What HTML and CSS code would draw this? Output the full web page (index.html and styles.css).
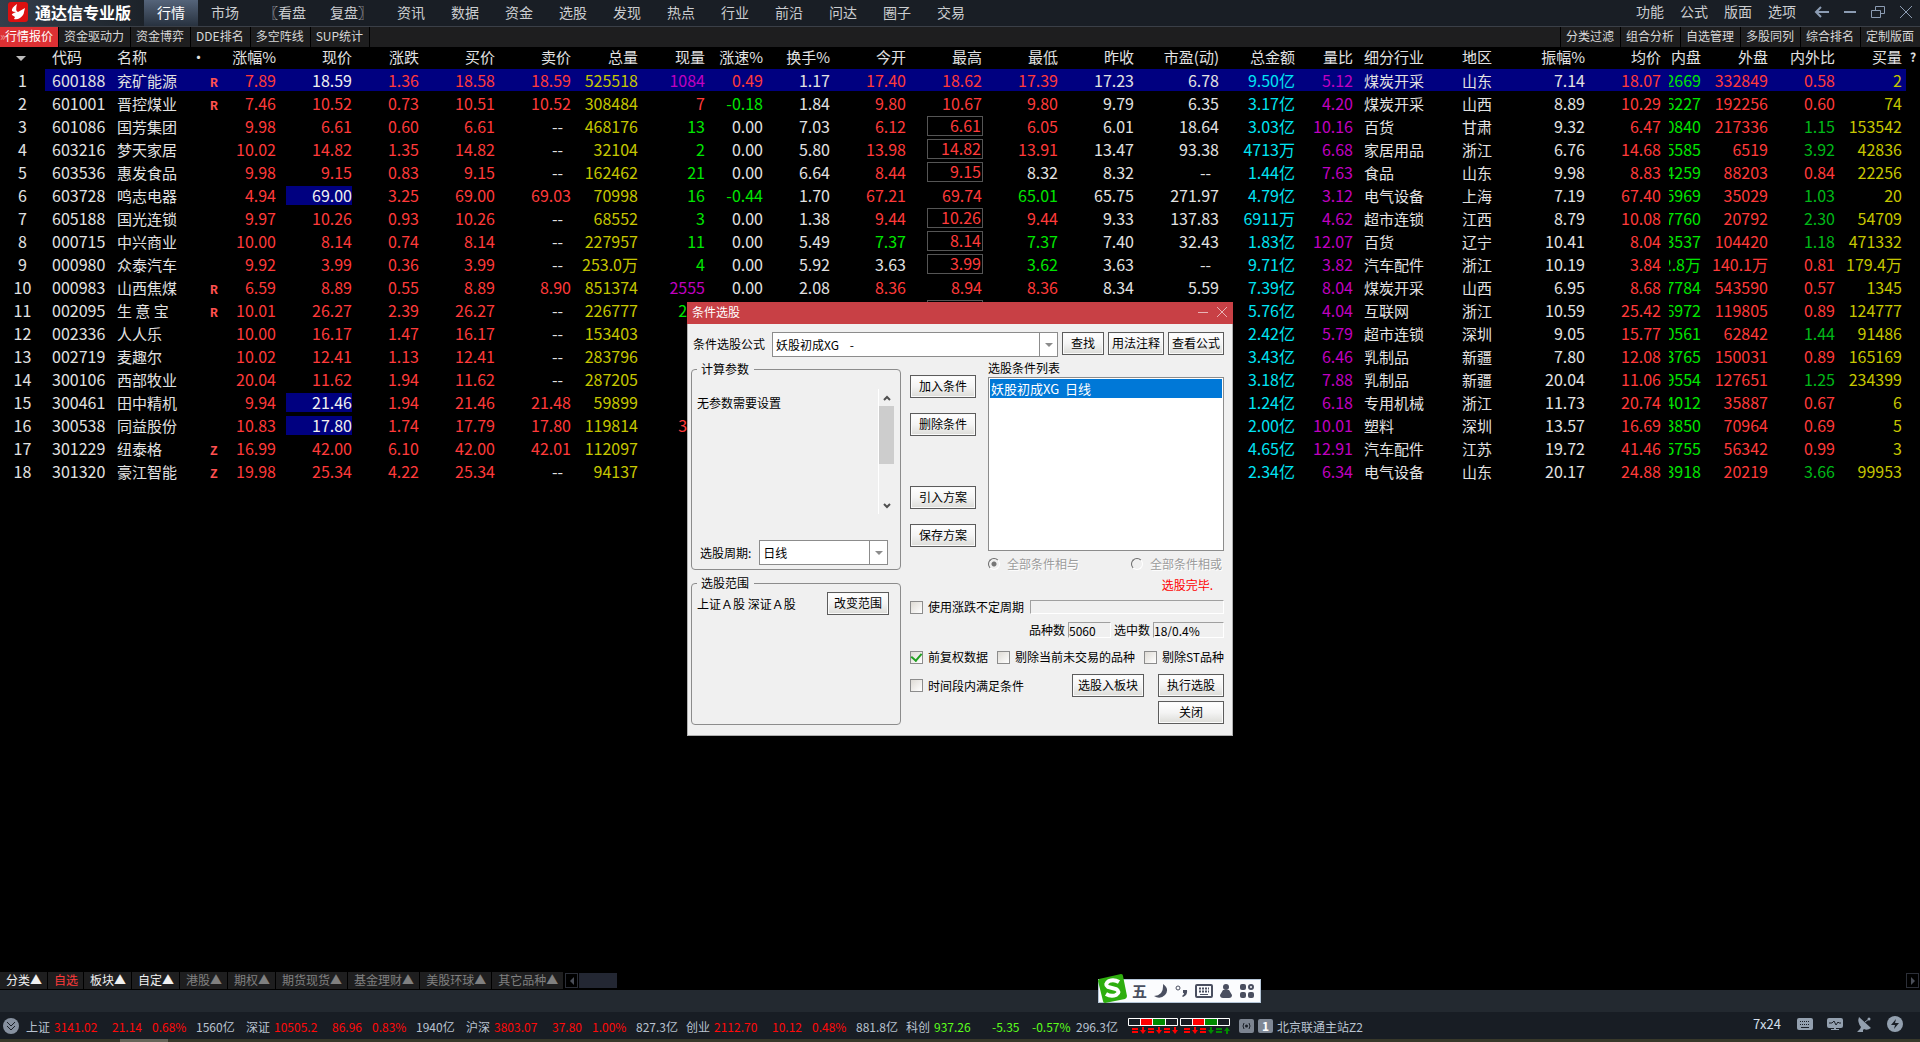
FILE: index.html
```html
<!DOCTYPE html>
<html lang="zh-CN">
<head>
    <meta charset="UTF-8">
    <meta name="viewport" content="width=device-width, initial-scale=1.0">
    <title>通达信专业版</title>
    <link rel="stylesheet" href="styles.css">
</head>
<body>
    <header class="topbar">
        <div class="brand">
            <svg width="20" height="20" viewBox="0 0 20 20">
                <rect width="20" height="20" rx="3" fill="#dc1010"/>
                <path d="M9 2Q3 6 4 9q1 1 4 1-5 2-4 3l3 2-1 2q3 1 6-1 4-3 4-6l1-4-7 4q-3-1-1-8z" fill="#fff"/>
            </svg>
            <span>通达信专业版</span>
        </div>
        <nav class="menu">
            <a href="#" class="active">行情</a>
            <a href="#">市场</a>
            <a href="#" class="wide">〖看盘</a>
            <a href="#" class="wide">复盘〗</a>
            <a href="#">资讯</a>
            <a href="#">数据</a>
            <a href="#">资金</a>
            <a href="#">选股</a>
            <a href="#">发现</a>
            <a href="#">热点</a>
            <a href="#">行业</a>
            <a href="#">前沿</a>
            <a href="#">问达</a>
            <a href="#">圈子</a>
            <a href="#">交易</a>
        </nav>
        <nav class="system">
            <a href="#">功能</a>
            <a href="#">公式</a>
            <a href="#">版面</a>
            <a href="#">选项</a>
        </nav>
        <div class="window-buttons">
            <button type="button" aria-label="返回"><svg width="16" height="16" viewBox="0 0 16 16"><path d="M15 8H2M7 3 2 8l5 5" stroke-width="2"/></svg></button>
            <button type="button" aria-label="最小化"><svg width="16" height="16" viewBox="0 0 16 16"><path d="M2 8h12" stroke-width="2"/></svg></button>
            <button type="button" aria-label="还原"><svg width="16" height="16" viewBox="0 0 16 16"><path d="M5.500 6V2.500h9v7H11M1.500 6.500h9v7h-9z"/></svg></button>
            <button type="button" aria-label="关闭"><svg width="16" height="16" viewBox="0 0 16 16"><path d="M2 2l12 12M14 2 2 14"/></svg></button>
        </div>
    </header>

    <div class="subbar">
        <nav class="views">
            <a href="#" class="active">行情报价</a>
            <a href="#">资金驱动力</a>
            <a href="#">资金博弈</a>
            <a href="#">DDE排名</a>
            <a href="#">多空阵线</a>
            <a href="#">SUP统计</a>
        </nav>
        <nav class="tools">
            <a href="#">分类过滤</a>
            <a href="#">组合分析</a>
            <a href="#">自选管理</a>
            <a href="#">多股同列</a>
            <a href="#">综合排名</a>
            <a href="#">定制版面</a>
        </nav>
    </div>

    <main class="board">
        <table class="quotes">
            <colgroup>
                <col class="w-index"><col class="w-code"><col class="w-name"><col class="w-mark"><col class="w-pct">
                <col class="w-num"><col class="w-short"><col class="w-num"><col class="w-num"><col class="w-short">
                <col class="w-short"><col class="w-speed"><col class="w-short"><col class="w-num"><col class="w-num">
                <col class="w-num"><col class="w-num"><col class="w-pe"><col class="w-num"><col class="w-speed">
                <col class="w-industry"><col class="w-area"><col class="w-amp"><col class="w-num"><col class="w-inner">
                <col class="w-short"><col class="w-short"><col class="w-bidvol"><col class="w-help">
            </colgroup>
            <thead>
                <tr>
                    <th><span class="sort"></span></th><th>代码</th><th>名称</th><th>•</th><th>涨幅%</th>
                    <th>现价</th><th>涨跌</th><th>买价</th><th>卖价</th><th>总量</th>
                    <th>现量</th><th>涨速%</th><th>换手%</th><th>今开</th><th>最高</th>
                    <th>最低</th><th>昨收</th><th>市盈(动)</th><th>总金额</th><th>量比</th>
                    <th>细分行业</th><th>地区</th><th>振幅%</th><th>均价</th><th>内盘</th>
                    <th>外盘</th><th>内外比</th><th>买量</th><th>?</th>
                </tr>
            </thead>
            <tbody id="quotes-body"></tbody>
        </table>
    </main>

    <nav class="market-tabs">
        <a href="#">分类▲</a>
        <a href="#" class="active">自选</a>
        <a href="#">板块▲</a>
        <a href="#">自定▲</a>
        <a href="#" class="dim">港股▲</a>
        <a href="#" class="dim">期权▲</a>
        <a href="#" class="dim">期货现货▲</a>
        <a href="#" class="dim">基金理财▲</a>
        <a href="#" class="dim">美股环球▲</a>
        <a href="#" class="dim">其它品种▲</a>
        <button type="button" class="scroll-btn" aria-label="向左"><svg width="6" height="8" viewBox="0 0 6 8"><path d="M5 0v8L1 4z"/></svg></button>
        <span class="scroll-thumb"></span>
        <button type="button" class="scroll-btn last" aria-label="向右"><svg width="6" height="8" viewBox="0 0 6 8"><path d="M1 0v8l4-4z"/></svg></button>
    </nav>

    <div class="band"></div>

    <footer class="status">
        <svg class="expand" width="16" height="18" viewBox="0 0 16 18">
            <ellipse cx="8" cy="9" rx="8" ry="8" fill="#8791a0"/>
            <path d="M4 5l4 4 4-4M4 9l4 4 4-4" fill="none" stroke="#1a1f27"/>
        </svg>
        <div class="index up"><b>上证</b><i>3141.02</i><i>21.14</i><i>0.68%</i><b>1560亿</b></div>
        <div class="index up"><b>深证</b><i>10505.2</i><i>86.96</i><i>0.83%</i><b>1940亿</b></div>
        <div class="index up"><b>沪深</b><i>3803.07</i><i>37.80</i><i>1.00%</i><b>827.3亿</b></div>
        <div class="index up"><b>创业</b><i>2112.70</i><i>10.12</i><i>0.48%</i><b>881.8亿</b></div>
        <div class="index down"><b>科创</b><i>937.26</i><i>-5.35</i><i>-0.57%</i><b>296.3亿</b></div>
        <svg class="breadth" width="103" height="16" viewBox="0 0 103 16">
            <path d="M12 1h13v6H12zM64 1h13v6H64z" fill="#f00"/>
            <path d="M25 1h12v6H25zM77 1h12v6H77z" fill="#008a00"/>
            <path d="M.5.5h49v7H.5zM12.500 1v6M24.500 1v6M37.500 1v6M52.500.5h49v7h-49zM64.500 1v6M76.500 1v6M89.500 1v6" fill="none" stroke="#fff"/>
            <path d="M4 10h6v2H4zM4 13h6v2H4zM20 10h6v2h-6zM20 13h6v2h-6zM36 10h6v2h-6zM36 13h6v2h-6zM56 10h6v2h-6zM56 13h6v2h-6zM72 10h6v2h-6zM72 13h6v2h-6zM14 9h2v3h2l-3 4-3-4h2zM30 9h2v3h2l-3 4-3-4h2zM46 9h2v3h2l-3 4-3-4h2zM66 9h2v3h2l-3 4-3-4h2z" fill="#f00"/>
            <path d="M82 9h2v3h2l-3 4-3-4h2zM88 10h6v2h-6zM88 13h6v2h-6zM98 16h2v-3h2l-3-4-3 4h2z" fill="#008a00"/>
        </svg>
        <div class="server">
            <svg width="15" height="14" viewBox="0 0 15 14">
                <rect width="15" height="14" rx="2" fill="#7c8490"/>
                <path d="M5 4q-2 3 0 6M10 4q2 3 0 6" fill="none" stroke="#1a1f27"/>
                <circle cx="7.500" cy="7" r="1.500" fill="#1a1f27"/>
            </svg>
            <span class="server-no">1</span>
            <span>北京联通主站Z2</span>
        </div>
        <div class="tray">
            <span class="clock">7x24</span>
            <svg width="16" height="16" viewBox="0 0 16 16">
                <rect y="2" width="16" height="12" rx="2" fill="#93a0af"/>
                <path d="M3 5.500h10M3 8.500h10" stroke="#1a1f27" stroke-dasharray="1 1"/>
                <path d="M4 11.500h8" stroke="#1a1f27"/>
            </svg>
            <svg width="16" height="16" viewBox="0 0 16 16">
                <path d="M2 2h12q2 0 2 2v6q0 2-2 2H9v1h3v1H4v-1h3v-1H2q-2 0-2-2V4q0-2 2-2z" fill="#93a0af"/>
                <path d="M2 7h3l2-2 2 4 2-3 1 1h2" fill="none" stroke="#1a1f27"/>
            </svg>
            <svg width="16" height="16" viewBox="0 0 16 16">
                <path d="M2 1l12 11q-4 3-7 1l-1 1v2H0l3-3 1-2Q0 6 2 1z" fill="#93a0af"/>
                <path d="M8 6l4-3" stroke="#93a0af"/>
                <circle cx="12" cy="3" r="1.500" fill="#93a0af"/>
            </svg>
            <svg width="16" height="16" viewBox="0 0 16 16">
                <circle cx="8" cy="8" r="8" fill="#93a0af"/>
                <path d="M9 3 4 9h4l-1 4 5-6H8z" fill="#1a1f27"/>
            </svg>
        </div>
    </footer>
    <div class="desk-edge"><span></span></div>

    <div class="ime">
        <svg class="ime-logo" width="30" height="29" viewBox="0 0 30 29">
            <path d="M1 5 23 0q2 0 2 2l4 20q0 2-2 3L7 29q-2 0-2-2L0 7q0-1 1-2z" fill="#2eae0e"/>
            <path d="M21 8q-5-3-10-1-5 3-1 6l8 2q5 3 0 6-5 2-10-1" fill="none" stroke="#fff" stroke-width="4"/>
        </svg>
        <span class="ime-mode">五</span>
        <svg width="16" height="16" viewBox="0 0 16 16"><path d="M10 1q7 5 2 11-5 5-11 1 10 0 9-12z"/></svg>
        <svg width="14" height="16" viewBox="0 0 14 16"><circle cx="3" cy="5" r="2" fill="none" stroke="#4a4f60"/><path d="M8 7h4q1 5-4 7l-1-1q2-1 2-3H8z"/></svg>
        <svg width="18" height="16" viewBox="0 0 18 16"><path d="M2 2h14q1 0 1 1v10q0 1-1 1H2q-1 0-1-1V3q0-1 1-1z" fill="none" stroke="#4a4f60" stroke-width="2"/><path d="M4 5.500h10M4 8.500h10" stroke="#4a4f60" stroke-width="2" stroke-dasharray="2 1"/><path d="M5 11.500h8" stroke="#4a4f60"/></svg>
        <svg width="14" height="16" viewBox="0 0 14 16"><circle cx="7" cy="4" r="3"/><path d="M4 7h6l3 5q0 3-3 3H4q-3 0-3-3z"/></svg>
        <svg width="16" height="16" viewBox="0 0 16 16"><rect x="1" y="1" width="6" height="6" rx="2"/><rect x="1" y="9" width="6" height="6" rx="2"/><rect x="9" y="9" width="6" height="6" rx="2"/><circle cx="12" cy="4" r="2" fill="none" stroke="#4a4f60" stroke-width="2"/></svg>
    </div>

    <section class="dialog" role="dialog" aria-labelledby="dialog-title">
        <div class="dialog-title">
            <span id="dialog-title">条件选股</span>
            <button type="button" aria-label="最小化"><svg width="10" height="10" viewBox="0 0 10 10"><path d="M0 5.500h10"/></svg></button>
            <button type="button" aria-label="关闭"><svg width="10" height="10" viewBox="0 0 10 10"><path d="M0 0l10 10M10 0 0 10"/></svg></button>
        </div>
        <form class="dialog-body">
            <div class="formula">
                <label for="formula">条件选股公式</label>
                <div class="combo">
                    <select id="formula"><option>妖股初成XG&nbsp;&nbsp;&nbsp; -</option></select>
                </div>
                <button type="button">查找</button>
                <button type="button">用法注释</button>
                <button type="button">查看公式</button>
            </div>
            <div class="columns">
                <div class="left">
                    <fieldset class="params">
                        <legend>计算参数</legend>
                        <div class="param-box">
                            <span>无参数需要设置</span>
                            <div class="scrollbar">
                                <svg width="8" height="17" viewBox="0 0 8 17"><path d="M1 11l3-3 3 3"/></svg>
                                <div class="thumb"></div>
                                <svg width="8" height="17" viewBox="0 0 8 17"><path d="M1 7l3 3 3-3"/></svg>
                            </div>
                        </div>
                        <div class="period">
                            <label for="period">选股周期:</label>
                            <div class="combo">
                                <select id="period"><option>日线</option></select>
                            </div>
                        </div>
                    </fieldset>
                    <fieldset class="range">
                        <legend>选股范围</legend>
                        <div class="range-row">
                            <span>上证Ａ股 深证Ａ股</span>
                            <button type="button">改变范围</button>
                        </div>
                    </fieldset>
                </div>
                <div class="right">
                    <div class="conditions">
                        <div class="actions">
                            <button type="button">加入条件</button>
                            <button type="button">删除条件</button>
                            <button type="button" class="apart">引入方案</button>
                            <button type="button">保存方案</button>
                        </div>
                        <div class="list">
                            <div id="list-label">选股条件列表</div>
                            <ul role="listbox" aria-labelledby="list-label">
                                <li role="option" aria-selected="true">妖股初成XG&nbsp; 日线</li>
                            </ul>
                            <div class="logic">
                                <label><input type="radio" name="logic" checked disabled>全部条件相与</label>
                                <label><input type="radio" name="logic" disabled>全部条件相或</label>
                            </div>
                        </div>
                    </div>
                    <div class="done">选股完毕.</div>
                    <div class="row variable">
                        <label><input type="checkbox">使用涨跌不定周期</label>
                        <input type="text" class="sunken" aria-label="涨跌不定周期" readonly>
                    </div>
                    <div class="row counts">
                        <label for="total">品种数</label>
                        <input type="text" id="total" class="sunken total" value="5060" readonly>
                        <label for="picked">选中数</label>
                        <input type="text" id="picked" class="sunken picked" value="18/0.4%" readonly>
                    </div>
                    <div class="row filters">
                        <label><input type="checkbox" checked>前复权数据</label>
                        <label><input type="checkbox">剔除当前未交易的品种</label>
                        <label><input type="checkbox">剔除ST品种</label>
                    </div>
                    <div class="row run">
                        <label><input type="checkbox">时间段内满足条件</label>
                        <button type="button">选股入板块</button>
                        <button type="button" class="main-btn">执行选股</button>
                    </div>
                    <div class="row close">
                        <button type="button" class="main-btn">关闭</button>
                    </div>
                </div>
            </div>
        </form>
    </section>

    <script src="quotes.js"></script>
</body>
</html>
```

FILE: quotes.js
```js
// 代码|名称|标记|涨幅|现价|涨跌|买价|卖价|总量|现量|涨速|换手|今开|最高|最低|昨收|市盈|总金额|量比|行业|地区|振幅|均价|内盘|外盘|内外比|买量
// 现价前的 ! 表示刚刚变动；现量前的 + - * 表示买盘、卖盘、大单
const rows = [
    '600188|兖矿能源|R|7.89|!18.59|1.36|18.58|18.59|525518|*1084|0.49|1.17|17.40|18.62|17.39|17.23|6.78|9.50亿|5.12|煤炭开采|山东|7.14|18.07|2669|332849|0.58|2',
    '601001|晋控煤业|R|7.46|10.52|0.73|10.51|10.52|308484|+7|-0.18|1.84|9.80|10.67|9.80|9.79|6.35|3.17亿|4.20|煤炭开采|山西|8.89|10.29|6227|192256|0.60|74',
    '601086|国芳集团||9.98|6.61|0.60|6.61|--|468176|-13|0.00|7.03|6.12|6.61|6.05|6.01|18.64|3.03亿|10.16|百货|甘肃|9.32|6.47|0840|217336|1.15|153542',
    '603216|梦天家居||10.02|14.82|1.35|14.82|--|32104|-2|0.00|5.80|13.98|14.82|13.91|13.47|93.38|4713万|6.68|家居用品|浙江|6.76|14.68|5585|6519|3.92|42836',
    '603536|惠发食品||9.98|9.15|0.83|9.15|--|162462|-21|0.00|6.64|8.44|9.15|8.32|8.32|--|1.44亿|7.63|食品|山东|9.98|8.83|4259|88203|0.84|22256',
    '603728|鸣志电器||4.94|!69.00|3.25|69.00|69.03|70998|-16|-0.44|1.70|67.21|69.74|65.01|65.75|271.97|4.79亿|3.12|电气设备|上海|7.19|67.40|5969|35029|1.03|20',
    '605188|国光连锁||9.97|10.26|0.93|10.26|--|68552|-3|0.00|1.38|9.44|10.26|9.44|9.33|137.83|6911万|4.62|超市连锁|江西|8.79|10.08|7760|20792|2.30|54709',
    '000715|中兴商业||10.00|8.14|0.74|8.14|--|227957|-11|0.00|5.49|7.37|8.14|7.37|7.40|32.43|1.83亿|12.07|百货|辽宁|10.41|8.04|3537|104420|1.18|471332',
    '000980|众泰汽车||9.92|3.99|0.36|3.99|--|253.0万|-4|0.00|5.92|3.63|3.99|3.62|3.63|--|9.71亿|3.82|汽车配件|浙江|10.19|3.84|2.8万|140.1万|0.81|179.4万',
    '000983|山西焦煤|R|6.59|8.89|0.55|8.89|8.90|851374|*2555|0.00|2.08|8.36|8.94|8.36|8.34|5.59|7.39亿|8.04|煤炭开采|山西|6.95|8.68|7784|543590|0.57|1345',
    '002095|生 意 宝|R|10.01|26.27|2.39|26.27|--|226777|-215||||26.27||||5.76亿|4.04|互联网|浙江|10.59|25.42|6972|119805|0.89|124777',
    '002336|人人乐||10.00|16.17|1.47|16.17|--|153403|||||||||2.42亿|5.79|超市连锁|深圳|9.05|15.77|0561|62842|1.44|91486',
    '002719|麦趣尔||10.02|12.41|1.13|12.41|--|283796|||||||||3.43亿|6.46|乳制品|新疆|7.80|12.08|3765|150031|0.89|165169',
    '300106|西部牧业||20.04|11.62|1.94|11.62|--|287205|||||||||3.18亿|7.88|乳制品|新疆|20.04|11.06|9554|127651|1.25|234399',
    '300461|田中精机||9.94|!21.46|1.94|21.46|21.48|59899|||||||||1.24亿|6.18|专用机械|浙江|11.73|20.74|4012|35887|0.67|6',
    '300538|同益股份||10.83|!17.80|1.74|17.79|17.80|119814|+360||||||||2.00亿|10.01|塑料|深圳|13.57|16.69|3850|70964|0.69|5',
    '301229|纽泰格|Z|16.99|42.00|6.10|42.00|42.01|112097|||||||||4.65亿|12.91|汽车配件|江苏|19.72|41.46|5755|56342|0.99|3',
    '301320|豪江智能|Z|19.98|25.34|4.22|25.34|--|94137|||||||||2.34亿|6.34|电气设备|山东|20.17|24.88|3918|20219|3.66|99953'
];

const columnClass = ['code', 'name', 'mark', 'up', 'up', 'up', 'up', 'up', 'vol', '', '', '', '', '', '', '', '',
    'amount', 'big', 'text industry', 'text area', '', 'up', 'inner', 'up', '', 'vol bidvol'];

function trend(value, base) {
    if (value > base) return 'up';
    return value < base ? 'down' : '';
}

function renderRow(line, index) {
    const cells = line.split('|');
    const price = cells[4].replace('!', '');
    const prev = Number(cells[15]);
    let html = '<td class="no">' + (index + 1) + '</td>';

    cells.forEach(function (value, i) {
        let cls = columnClass[i];
        let inner = value;

        if (i === 4 && value[0] === '!') {
            inner = '<span class="flash">' + price + '</span>';
        } else if (i === 9 && value) {
            cls = { '+': 'up', '-': 'down', '*': 'big' }[value[0]];
            inner = value.slice(1);
        } else if (i === 10) {
            cls = trend(Number(value), 0);
        } else if (i >= 12 && i <= 14) {
            cls = trend(Number(value), prev);
            if (i === 13 && value && value === price) {
                inner = '<span class="limit">' + value + '</span>';
            }
        } else if (i === 23) {
            inner = '<span class="clip">' + value + '</span>';
        } else if (i === 25) {
            cls = value > 1 ? 'weak' : 'up';
        }
        if (value === '--') cls = 'none';
        html += '<td class="' + cls + '">' + inner + '</td>';
    });

    return '<tr' + (index === 0 ? ' class="selected"' : '') + '>' + html + '<td class="tail"></td></tr>';
}

document.getElementById('quotes-body').innerHTML = rows.map(renderRow).join('');
```

FILE: styles.css
```css
:root {
    --up: #ff3a3a;
    --down: #00e600;
    --text: #e2e2e2;
    --panel: #1e1e1f;
    --navy: #000080;
}

* {
    box-sizing: border-box;
}

body {
    margin: 0;
    height: 100vh;
    display: flex;
    flex-direction: column;
    overflow: hidden;
    position: relative;
    background-color: #000;
    color: var(--text);
    font-family: "Noto Sans CJK SC", "Noto Sans", sans-serif;
    font-size: 12px;
}

a {
    color: inherit;
    text-decoration: none;
    white-space: nowrap;
}

button,
input,
select {
    font-family: inherit;
    font-size: 12px;
    margin: 0;
}

/* 顶部菜单 */
.topbar {
    display: flex;
    height: 27px;
    flex: none;
    background-color: #191e25;
    border-bottom: 1px solid #3a3f47;
    font-size: 14px;
    line-height: 25px;
    color: #cbcdd0;
}

.brand {
    width: 144px;
    padding: 0 0 2px 8px;
    display: flex;
    align-items: center;
    gap: 7px;
    background: linear-gradient(to right, #343e4b, #1c2229);
    color: #fff;
    font-size: 16px;
    font-weight: bold;
    white-space: nowrap;
}

.menu {
    display: flex;
    flex: 1;
}

.menu a {
    padding: 0 13px;
}

.menu a.wide {
    padding: 0 12px;
}

.menu a.active {
    background: linear-gradient(#55647a, #28323f);
    color: #fff;
}

.system {
    display: flex;
    gap: 16px;
    line-height: 23px;
}

.window-buttons {
    display: flex;
    align-items: center;
    gap: 12px;
    padding: 0 6px 2px 18px;
}

.window-buttons button {
    display: flex;
    padding: 0;
    border: none;
    background: none;
}

.window-buttons path {
    fill: none;
    stroke: #8c9cb3;
}

.subbar {
    display: flex;
    justify-content: space-between;
    height: 20px;
    flex: none;
    background-color: var(--panel);
    line-height: 18px;
    color: #d8d8d8;
}

.views,
.tools {
    display: flex;
}

.views a {
    padding: 0 6px 0 5px;
    border-right: 1px solid #000;
}

.views a.active {
    position: relative;
    padding-right: 5px;
    background-color: #dc3033;
    color: #fff;
}

.views a.active::before {
    content: "»";
    position: absolute;
    left: 0;
    color: #f09a9a;
}

.tools a {
    padding: 0 6px 0 5px;
    border-left: 1px solid #000;
}

/* 行情表 */
.board {
    flex: 1;
    min-height: 0;
    overflow: hidden;
}

.quotes {
    width: 100%;
    table-layout: fixed;
    border-collapse: separate;
    border-spacing: 0;
    font-size: 16px;
    line-height: 22px;
    text-align: right;
    white-space: nowrap;
}

.w-index { width: 45px; }
.w-code { width: 65px; }
.w-name { width: 80px; }
.w-mark { width: 36px; }
.w-pct { width: 50px; }
.w-num { width: 76px; }
.w-short { width: 67px; }
.w-speed { width: 58px; }
.w-pe { width: 85px; }
.w-industry { width: 98px; }
.w-area { width: 70px; }
.w-amp { width: 64px; }
.w-inner { width: 40px; }
.w-bidvol { width: 71px; }
.w-help { width: 14px; }

.quotes th {
    height: 22px;
    padding: 0 0 3px;
    font-size: 15px;
    font-weight: normal;
    line-height: 19px;
}

.quotes td {
    height: 23px;
    padding: 0;
    border-bottom: 1px solid #000;
}

.quotes th:first-child,
.quotes td.no {
    text-align: center;
}

.quotes th:nth-child(2),
.quotes th:nth-child(3),
.quotes td.code,
.quotes td.name {
    padding-left: 7px;
    text-align: left;
}

.quotes th:nth-child(4) {
    padding-left: 1px;
    text-align: left;
}

.quotes th:nth-child(21),
.quotes th:nth-child(22),
.quotes td.text {
    padding-left: 11px;
    text-align: left;
}

.quotes th:nth-child(28),
.quotes td.bidvol {
    padding-right: 4px;
}

.quotes th:last-child {
    font-size: 12px;
    font-weight: bold;
    text-align: center;
}

.quotes td.name,
.quotes td.text {
    font-size: 15px;
    line-height: 21px;
}

.quotes td.mark {
    padding: 7px 0 0 20px;
    font: bold 13px/14px "Liberation Mono", monospace;
    text-align: left;
    color: #ff5050;
}

.quotes .up { color: var(--up); }
.quotes .down, .quotes .inner { color: var(--down); }
.quotes .weak { color: #00b818; }
.quotes .vol { color: #c6c600; }
.quotes .big { color: #c000c0; }
.quotes .amount { color: #00e4f4; }

.quotes td.none {
    padding-right: 8px;
    color: var(--text);
}

.quotes .selected td:not(.no):not(.tail) {
    background-color: var(--navy);
}

.sort {
    display: inline-block;
    margin-right: 4px;
    border: 5px solid transparent;
    border-top-color: #bbb;
    border-bottom: none;
    vertical-align: middle;
}

.flash {
    display: block;
    height: 19px;
    margin-left: 10px;
    background-color: var(--navy);
    color: #f0f0f0;
    line-height: 19px;
}

.limit {
    display: block;
    height: 20px;
    margin: 1px -1px 1px 21px;
    padding-right: 1px;
    border: 1px solid #555;
    line-height: 17px;
}

.clip {
    display: flex;
    justify-content: flex-end;
    margin-left: 8px;
    overflow: hidden;
}

/* 底部分类标签 */
.market-tabs {
    display: flex;
    height: 18px;
    flex: none;
    padding-bottom: 1px;
    line-height: 16px;
    color: #f0f0f0;
}

.market-tabs a {
    padding: 0 5px 0 6px;
    border-right: 1px solid #000;
    background-color: var(--panel);
}

.market-tabs a.active {
    color: var(--up);
}

.market-tabs a.dim {
    color: #808080;
}

.scroll-btn {
    display: flex;
    align-items: center;
    justify-content: center;
    width: 13px;
    height: 15px;
    margin: 1px 1px 0;
    padding: 0;
    border: 1px solid #2c2f38;
    background-color: #000;
}

.scroll-btn path {
    fill: #4a4e58;
}

.scroll-btn.last {
    margin-left: auto;
}

.scroll-thumb {
    width: 38px;
    height: 15px;
    margin-top: 1px;
    background-color: #232733;
}

.band {
    height: 22px;
    flex: none;
    background-color: #232930;
}

.status {
    display: flex;
    align-items: center;
    height: 27px;
    flex: none;
    padding: 1px 17px 0 3px;
    background-color: #181d24;
    white-space: nowrap;
}

.expand {
    margin-right: 7px;
}

.index {
    display: grid;
    grid-template-columns: 28px 58px 40px 44px 50px;
}

.index b,
.index i {
    font-weight: normal;
    font-style: normal;
    color: #b9c3d0;
}

.index.up i { color: #ff0a0a; }
.index.down i { color: #5cff1c; }

.breadth {
    margin: 0 8px 0 2px;
}

.server {
    display: flex;
    align-items: center;
    gap: 4px;
    color: #b9c3d0;
}

.server-no {
    width: 15px;
    height: 14px;
    border-radius: 2px;
    background-color: #7f8895;
    color: #fff;
    font-weight: bold;
    line-height: 13px;
    text-align: center;
}

.tray {
    display: flex;
    align-items: center;
    gap: 14px;
    margin-left: auto;
    padding-bottom: 4px;
}

.clock {
    margin-right: 2px;
    color: #d5e0ee;
    font-size: 13px;
    line-height: 16px;
}

.desk-edge {
    height: 3px;
    flex: none;
    padding-left: 120px;
    background-color: #37382a;
}

.desk-edge span {
    display: block;
    width: 48px;
    height: 3px;
    background-color: #666559;
}

/* 输入法条 */
.ime {
    position: absolute;
    right: 659px;
    bottom: 39px;
    display: flex;
    align-items: center;
    gap: 6px;
    height: 24px;
    padding: 0 5px 0 33px;
    border: 1px solid #b5c6d8;
    background-color: #fbfcfe;
    color: #4a4f60;
}

.ime svg {
    fill: #4a4f60;
}

.ime-logo {
    position: absolute;
    left: -1px;
    bottom: -1px;
}

.ime-mode {
    font-size: 15px;
    font-weight: bold;
    line-height: 20px;
}

/* 条件选股窗口 */
.dialog {
    position: absolute;
    top: 302px;
    left: calc(50% - 273px);
    width: 546px;
    border: 1px solid #b0b0b0;
    border-top: none;
    background-color: #f0f0f0;
    color: #000;
    line-height: 16px;
}

.dialog-title {
    display: flex;
    align-items: center;
    gap: 9px;
    height: 22px;
    margin: 0 -1px;
    padding: 0 6px 2px 5px;
    background-color: #c84045;
    color: #fff;
}

.dialog-title span {
    margin-right: auto;
}

.dialog-title button {
    display: flex;
    padding: 0;
    border: none;
    background: none;
}

.dialog-title path {
    stroke: #e9b4b6;
}

.dialog-body {
    display: flex;
    flex-direction: column;
    gap: 4px;
    padding: 8px 8px 10px 3px;
}

.dialog-body button {
    height: 23px;
    padding: 0 3px 1px;
    border: 1px solid #5c5c5c;
    background: linear-gradient(#fff, #f4f4f4 50%, #dcdcd8);
    box-shadow: inset 0 0 0 1px #fafafa;
    color: #000;
    line-height: 16px;
    white-space: nowrap;
}

.formula {
    display: flex;
    gap: 4px;
}

.formula label {
    margin: 0 3px 2px 2px;
}

.formula .combo {
    flex: 1;
}

.formula button {
    min-width: 42px;
}

.combo {
    position: relative;
    flex: 1;
}

.combo select {
    display: block;
    width: 100%;
    height: 25px;
    padding: 0 3px;
    border: 1px solid #8c8c8c;
    border-radius: 0;
    background-color: #fff;
    color: #000;
    appearance: none;
}

.combo::before {
    content: "";
    position: absolute;
    top: 1px;
    right: 18px;
    bottom: 1px;
    border-left: 1px solid #8c8c8c;
}

.combo::after {
    content: "";
    position: absolute;
    top: 11px;
    right: 5px;
    border: 4px solid transparent;
    border-top-color: #8c8c8c;
    border-bottom: none;
    pointer-events: none;
}

.columns {
    display: flex;
    gap: 9px;
}

.left {
    display: flex;
    flex-direction: column;
    gap: 5px;
    width: 210px;
}

fieldset {
    margin: 0;
    padding: 0 5px 5px;
    border: 1px solid #8c8c8c;
    border-radius: 4px;
}

legend {
    height: 16px;
    padding: 0 5px 0 4px;
}

.params {
    height: 209px;
}

.param-box {
    display: flex;
    justify-content: space-between;
    height: 125px;
    margin-top: 12px;
}

.param-box span {
    padding-top: 6px;
}

.scrollbar {
    width: 16px;
    margin-right: 1px;
    border-left: 1px solid #fff;
    display: flex;
    flex-direction: column;
    align-items: center;
}

.scrollbar path {
    fill: none;
    stroke: #505050;
    stroke-width: 2;
}

.scrollbar .thumb {
    width: 100%;
    height: 58px;
    margin-bottom: auto;
    background-color: #cdcdcd;
}

.period {
    display: flex;
    align-items: center;
    gap: 8px;
    margin: 26px 7px 0 3px;
}

.range {
    flex: 1;
}

.range-row {
    display: flex;
    justify-content: space-between;
    align-items: center;
    padding: 1px 6px 0 0;
}

.range-row button {
    padding: 0 6px 1px;
}

.right {
    flex: 1;
    padding-bottom: 1px;
}

.conditions {
    display: flex;
    gap: 12px;
}

.actions {
    display: flex;
    flex-direction: column;
    gap: 15px;
    width: 66px;
    padding-top: 14px;
}

.actions .apart {
    margin-top: 35px;
}

.list {
    flex: 1;
}

#list-label {
    height: 16px;
    line-height: 14px;
}

.list ul {
    height: 174px;
    margin: 0 0 5px;
    padding: 1px;
    border: 1px solid #8c8c8c;
    background-color: #fff;
    list-style: none;
}

.list li {
    padding-left: 1px;
    background-color: #0078d7;
    color: #fff;
    font-size: 13px;
    line-height: 19px;
}

.logic {
    display: flex;
    justify-content: space-between;
    padding-right: 2px;
    color: #9c9c9c;
    text-shadow: 1px 1px #fff;
}

.dialog-body label {
    display: flex;
    align-items: center;
    gap: 5px;
    white-space: nowrap;
}

.logic input {
    width: 12px;
    height: 12px;
    border: 1px solid #fff;
    border-top-color: #6a6a6a;
    border-left-color: #6a6a6a;
    border-radius: 50%;
    appearance: none;
}

.logic input:checked {
    background: radial-gradient(#777 2px, transparent 3px);
}

.logic label {
    gap: 7px;
}

.done {
    padding: 5px 11px 6px 0;
    color: #f00;
    text-align: right;
}

.row {
    display: flex;
    align-items: center;
}

.row input[type="checkbox"] {
    display: grid;
    place-items: center;
    width: 13px;
    height: 13px;
    border: 1px solid #8c8c8c;
    background: linear-gradient(135deg, #dedbd5, #fff);
    appearance: none;
}

.row input[type="checkbox"]:checked::after {
    content: "";
    width: 5px;
    height: 8px;
    margin-top: -2px;
    border: solid #21a121;
    border-width: 0 2px 2px 0;
    rotate: 40deg;
}

.sunken {
    min-width: 0;
    padding: 0;
    border: 1px solid #fff;
    border-top-color: #a0a0a0;
    border-left-color: #a0a0a0;
    background-color: #f0f0f0;
    color: #000;
}

.variable .sunken {
    flex: 1;
    height: 14px;
    margin-left: 6px;
}

.counts {
    justify-content: flex-end;
    gap: 3px;
    margin: 7px 0 11px;
}

.counts .sunken {
    height: 16px;
}

.counts .total {
    width: 43px;
}

.counts .picked {
    width: 71px;
}

.filters {
    justify-content: space-between;
}

.run {
    margin: 9px 0 4px;
}

.run label {
    margin-right: auto;
}

.run .main-btn {
    margin-left: 14px;
}

.run button {
    padding: 0 5px 1px;
}

.row .main-btn {
    width: 66px;
}

.close {
    justify-content: flex-end;
}
```
